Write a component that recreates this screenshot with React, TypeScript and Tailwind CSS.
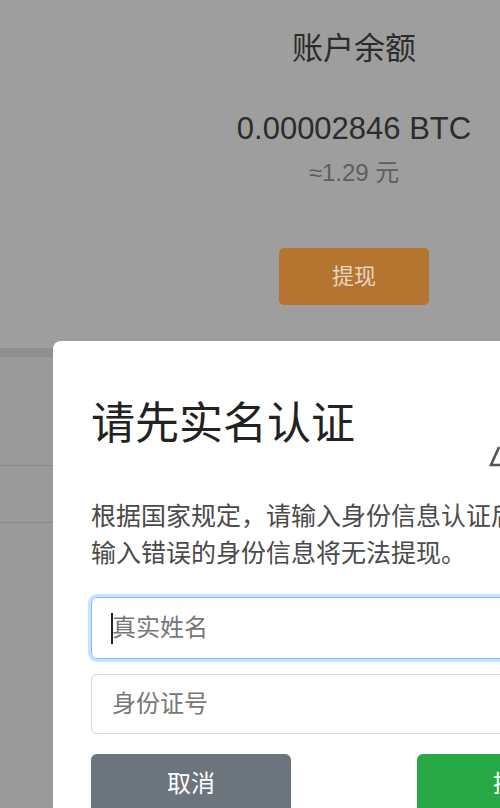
import React from 'react';

const FONT = 'font-["Liberation_Sans","Noto_Sans_CJK_SC",sans-serif]';

function Balance() {
  return (
    <div className="flex h-[348px]">
      <div className="w-[208px]" />
      <div className="flex flex-1 flex-col items-center pt-[29px]">
        <p className="text-[31px] leading-[40px] text-[#2c2c2c]">账户余额</p>
        <p className="mt-[40px] text-[31px] leading-[40px] text-[#2c2c2c]">0.00002846 BTC</p>
        <p className="mt-[9px] text-[24px] leading-[30px] text-[#5e5e5e]">≈1.29 元</p>
        <button className="mt-[60px] h-[57px] w-[150px] rounded-[5px] bg-[#b5742f] text-[22px] text-[#e6d6c4]">
          提现
        </button>
      </div>
    </div>
  );
}

function Modal() {
  return (
    <div className="absolute left-[53px] top-[341px] h-[520px] w-[602px] rounded-t-[8px] bg-white px-[38px] pt-[55px]">
      <h2 className="text-[44px] leading-[56px] text-[#222]">请先实名认证</h2>

      {/* clipped close glyph on the right */}
      <svg className="absolute left-[436px] top-[105px]" width="14" height="22" viewBox="0 0 14 22">
        <path d="M10 1 L2 19 L14 19" fill="none" stroke="#555" strokeWidth="2.6" />
      </svg>

      <p className="mt-[46px] whitespace-nowrap text-[25px] leading-[37px] text-[#4a4a4a]">
        根据国家规定，请输入身份信息认证后才可提现，
        <br />
        输入错误的身份信息将无法提现。
      </p>

      <div className="relative mt-[25px]">
        <input
          className="h-[62px] w-full rounded-[6px] border border-[#80bdff] px-[20px] text-[24px] text-[#333] shadow-[0_0_0_3px_rgba(0,123,255,0.22)] outline-none placeholder:text-[#777]"
          placeholder="真实姓名"
        />
        <span className="absolute left-[20px] top-[16px] h-[31px] w-[1.5px] bg-[#222]" />
      </div>

      <input
        className="mt-[15px] h-[60px] w-full rounded-[6px] border border-[#d6d6d6] px-[20px] text-[24px] text-[#333] outline-none placeholder:text-[#777]"
        placeholder="身份证号"
      />

      <div className="mt-[20px] flex justify-between">
        <button className="h-[60px] w-[200px] rounded-[6px] bg-[#6c757d] text-[24px] text-white">取消</button>
        <button className="h-[60px] w-[200px] rounded-[6px] bg-[#28a745] text-[24px] text-white">提交</button>
      </div>
    </div>
  );
}

export default function App() {
  return (
    <div className={`relative h-[808px] w-[500px] overflow-hidden bg-[#9e9e9e] ${FONT}`}>
      <Balance />
      <div className="h-[9px] bg-[#8f8f8f]" />
      <div className="h-[108px] bg-[#9a9a9a]" />
      <div className="h-[1px] bg-[#8a8a8a]" />
      <div className="h-[56px] bg-[#9a9a9a]" />
      <div className="h-[1px] bg-[#8a8a8a]" />
      <div className="h-[300px] bg-[#9a9a9a]" />
      <Modal />
    </div>
  );
}
